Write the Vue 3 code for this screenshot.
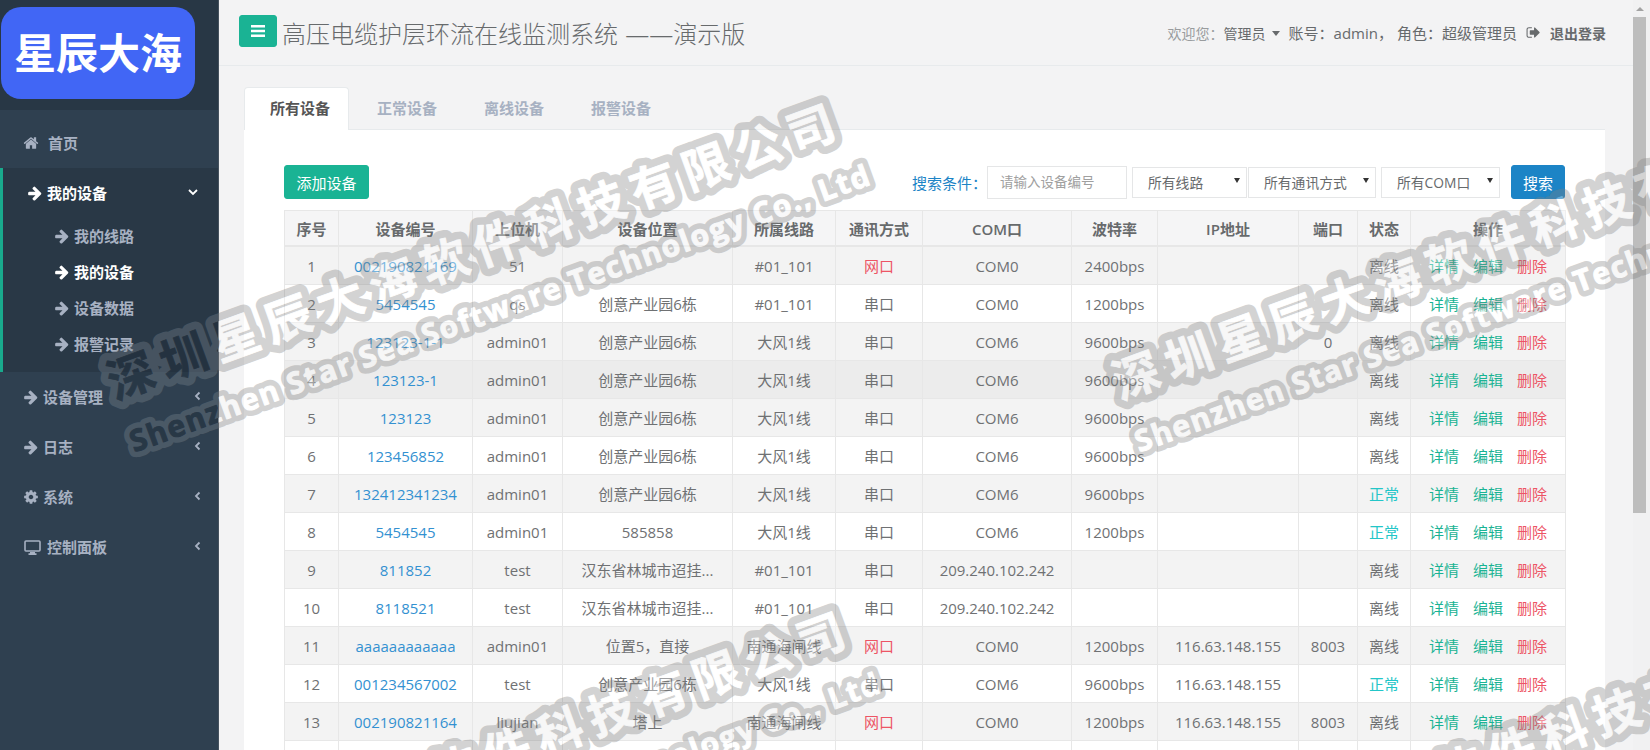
<template>
  <div class="page">
    <aside class="sidebar">
      <div class="logo-wrap">
        <div class="logo">星辰大海</div>
      </div>
      <nav>
        <a class="nav-row home">
          <svg class="ico" viewBox="0 0 1792 1792"><path :d="icons.home" /></svg>
          <span class="home-label">首页</span>
        </a>
        <div class="nav-open">
          <a class="nav-row open-head">
            <svg class="ico" viewBox="0 0 1792 1792"><path :d="icons.arrow" /></svg>
            <span>我的设备</span>
            <svg class="chev" viewBox="0 0 10 10"><path d="M1 3l4 4 4-4" /></svg>
          </a>
          <a v-for="s in subItems" :key="s" class="sub-row" :class="{ on: s === '我的设备' }">
            <svg class="ico" viewBox="0 0 1792 1792"><path :d="icons.arrow" /></svg>
            <span>{{ s }}</span>
          </a>
        </div>
        <a v-for="n in navItems" :key="n.label" class="nav-row">
          <svg v-if="n.icon === 'desktop'" class="ico desktop" viewBox="0 0 17 15">
            <rect x="1" y="1" width="15" height="10" rx="1" fill="none" stroke="currentColor" stroke-width="1.6" />
            <path d="M6 12h5v1.200h1.500V15h-8v-1.800H6z" />
          </svg>
          <svg v-else class="ico" viewBox="0 0 1792 1792"><path :d="icons[n.icon]" /></svg>
          <span>{{ n.label }}</span>
          <svg class="chev left" viewBox="0 0 10 10"><path d="M6.500 1.500L3 5l3.500 3.500" /></svg>
        </a>
      </nav>
      <svg class="wm-layer wm-dark" width="218" height="750">
        <g v-for="t in tiles" :key="t.x + '-' + t.y" :transform="`translate(${t.x} ${t.y}) rotate(-20)`">
          <g v-for="p in wmPasses" :key="p" :class="p">
            <text class="wm-cn" textLength="770">深圳星辰大海软件科技有限公司</text>
            <text class="wm-en" y="56" textLength="785">Shenzhen Star Sea Software Technology Co., Ltd</text>
          </g>
        </g>
      </svg>
    </aside>

    <main class="main">
      <header class="topbar">
        <div class="top-left">
          <button class="toggle">
            <svg viewBox="0 0 14 12" width="14" height="12"><path d="M0 1.300h14M0 6h14M0 10.700h14" stroke="#fff" stroke-width="2.600" /></svg>
          </button>
          <h1>高压电缆护层环流在线监测系统 ——演示版</h1>
        </div>
        <div class="top-right">
          <span class="welcome">欢迎您：</span>
          <span class="user">管理员<i class="caret"></i></span>
          <span class="account">账号：admin，</span>
          <span class="role">角色：超级管理员</span>
          <svg class="logout-ico" viewBox="0 0 1792 1792"><path :d="icons.signout" /></svg>
          <a class="logout">退出登录</a>
        </div>
      </header>

      <section class="content">
        <div class="tabs">
          <a v-for="(t, i) in tabs" :key="t" class="tab" :class="{ active: i === 0 }">{{ t }}</a>
        </div>
        <div class="panel">
          <div class="toolbar">
            <button class="btn add">添加设备</button>
            <div class="filters">
              <label>搜索条件：</label>
              <input class="search" placeholder="请输入设备编号" />
              <div class="sel-group">
                <span class="sel w1"><select><option>所有线路</option></select></span>
                <span class="sel w2"><select><option>所有通讯方式</option></select></span>
              </div>
              <span class="sel w3"><select><option>所有COM口</option></select></span>
              <button class="btn find">搜索</button>
            </div>
          </div>

          <table class="grid">
            <colgroup>
              <col v-for="w in colWidths" :key="w.k" :style="{ width: w.v + 'px' }" />
            </colgroup>
            <thead>
              <tr>
                <th v-for="h in heads" :key="h">{{ h }}</th>
              </tr>
            </thead>
            <tbody>
              <tr v-for="(r, i) in rows" :key="i" :class="{ stripe: i % 2 === 0, hover: i === 3 }">
                <td>{{ i + 1 }}</td>
                <td><a class="link">{{ r[0] }}</a></td>
                <td>{{ r[1] }}</td>
                <td>{{ r[2] }}</td>
                <td>{{ r[3] }}</td>
                <td :class="{ red: r[4] === '网口' }">{{ r[4] }}</td>
                <td>{{ r[5] }}</td>
                <td>{{ r[6] }}</td>
                <td>{{ r[7] }}</td>
                <td>{{ r[8] }}</td>
                <td :class="{ ok: r[9] === '正常' }">{{ r[9] }}</td>
                <td class="ops">
                  <a class="green">详情</a>
                  <a class="green">编辑</a>
                  <a class="red">删除</a>
                </td>
              </tr>
              <tr class="blank">
                <td v-for="h in heads" :key="h"></td>
              </tr>
            </tbody>
          </table>
        </div>
      </section>
    </main>

    <div class="scrollbar">
      <i class="up"></i>
      <div class="thumb"></div>
    </div>

    <svg class="wm-layer wm-light" width="1432" height="750" viewBox="218 0 1432 750">
      <g v-for="t in tiles" :key="t.x + '-' + t.y" :transform="`translate(${t.x} ${t.y}) rotate(-20)`">
        <g v-for="p in wmPasses" :key="p" :class="p">
          <text class="wm-cn" textLength="770">深圳星辰大海软件科技有限公司</text>
          <text class="wm-en" y="56" textLength="785">Shenzhen Star Sea Software Technology Co., Ltd</text>
        </g>
      </g>
    </svg>
  </div>
</template>

<script setup>
const icons = {
  home: 'M1472 992v480q0 26-19 45t-45 19h-384v-384h-256v384h-384q-26 0-45-19t-19-45v-480q0-1 .5-3t.5-3l575-474 575 474q1 2 1 6zm223-69l-62 74q-8 9-21 11h-3q-13 0-21-7l-692-577-692 577q-12 8-24 7-13-2-21-11l-62-74q-8-10-7-23.500t11-21.500l719-599q32-26 76-26t76 26l244 204v-195q0-14 9-23t23-9h192q14 0 23 9t9 23v408l219 182q10 8 11 21.500t-7 23.500z',
  arrow: 'M1600 960q0 54-37 91l-651 651q-39 37-91 37-51 0-90-37l-75-75q-38-38-38-91t38-91l293-293h-704q-52 0-84.500-37.500t-32.500-90.500v-128q0-53 32.500-90.500t84.500-37.500h704l-293-294q-38-36-38-90t38-90l75-75q38-38 90-38 53 0 91 38l651 651q37 35 37 90z',
  cog: 'M1152 896q0-106-75-181t-181-75-181 75-75 181 75 181 181 75 181-75 75-181zm512-109v222q0 12-8 23t-20 13l-185 28q-19 54-39 91 35 50 107 138 10 12 10 25t-9 23q-27 37-99 108t-94 71q-12 0-26-9l-138-108q-44 23-91 38-16 136-29 186-7 28-36 28h-222q-14 0-24.500-8.500t-11.500-21.500l-28-184q-49-16-90-37l-141 107q-10 9-25 9-14 0-25-11-126-114-165-168-7-10-7-23 0-12 8-23 15-21 51-66.500t54-70.500q-27-50-41-99l-183-27q-13-2-21-12.500t-8-23.500v-222q0-12 8-23t19-13l186-28q14-46 39-92-40-57-107-138-10-12-10-24 0-10 9-23 26-36 98.500-107.500t94.500-71.500q13 0 26 10l138 107q44-23 91-38 16-136 29-186 7-28 36-28h222q14 0 24.500 8.500t11.500 21.500l28 184q49 16 90 37l142-107q9-9 24-9 13 0 25 10 129 119 165 170 7 8 7 22 0 12-8 23-15 21-51 66.500t-54 70.500q26 50 41 98l183 28q13 2 21 12.500t8 23.500z',
  signout: 'M704 1440q0 4 1 20t.5 26.500-3 23.500-10 19.500-20.500 6.500h-320q-119 0-203.500-84.500t-84.500-203.500v-704q0-119 84.500-203.500t203.500-84.500h320q13 0 22.500 9.500t9.500 22.500q0 4 1 20t.5 26.500-3 23.500-10 19.500-20.500 6.500h-320q-66 0-113 47t-47 113v704q0 66 47 113t113 47h312l11.500 1 11.500 3 8 5.500 7 9 2 13.500zm928-544q0 26-19 45l-544 544q-19 19-45 19t-45-19-19-45v-288h-448q-26 0-45-19t-19-45v-384q0-26 19-45t45-19h448v-288q0-26 19-45t45-19 45 19l544 544q19 19 19 45z'
}

const subItems = ['我的线路', '我的设备', '设备数据', '报警记录']
const navItems = [
  { label: '设备管理', icon: 'arrow' },
  { label: '日志', icon: 'arrow' },
  { label: '系统', icon: 'cog' },
  { label: '控制面板', icon: 'desktop' }
]
const tabs = ['所有设备', '正常设备', '离线设备', '报警设备']
const heads = ['序号', '设备编号', '上位机', '设备位置', '所属线路', '通讯方式', 'COM口', '波特率', 'IP地址', '端口', '状态', '操作']
const colWidths = [54, 134, 90, 170, 103, 87, 149, 86, 141, 59, 53, 155].map((v, k) => ({ k, v }))

// 水印平铺位置，先画描边再画字
const tiles = [
  { x: 115, y: 400 },
  { x: 1120, y: 400 },
  { x: 125, y: 908 },
  { x: 1130, y: 908 }
]
const wmPasses = ['wm-under', 'wm-over']

const park = '创意产业园6栋'
const far = '汉东省林城市迢挂...'
const ip = '116.63.148.155'
const rows = [
  ['002190821169', '51', '', '#01_101', '网口', 'COM0', '2400bps', '', '', '离线'],
  ['5454545', 'qs', park, '#01_101', '串口', 'COM0', '1200bps', '', '', '离线'],
  ['123123-1-1', 'admin01', park, '大风1线', '串口', 'COM6', '9600bps', '', '0', '离线'],
  ['123123-1', 'admin01', park, '大风1线', '串口', 'COM6', '9600bps', '', '', '离线'],
  ['123123', 'admin01', park, '大风1线', '串口', 'COM6', '9600bps', '', '', '离线'],
  ['123456852', 'admin01', park, '大风1线', '串口', 'COM6', '9600bps', '', '', '离线'],
  ['132412341234', 'admin01', park, '大风1线', '串口', 'COM6', '9600bps', '', '', '正常'],
  ['5454545', 'admin01', '585858', '大风1线', '串口', 'COM6', '1200bps', '', '', '正常'],
  ['811852', 'test', far, '#01_101', '串口', '209.240.102.242', '', '', '', '离线'],
  ['8118521', 'test', far, '#01_101', '串口', '209.240.102.242', '', '', '', '离线'],
  ['aaaaaaaaaaaa', 'admin01', '位置5，直接', '南通海闸线', '网口', 'COM0', '1200bps', ip, '8003', '离线'],
  ['001234567002', 'test', park, '大风1线', '串口', 'COM6', '9600bps', ip, '', '正常'],
  ['002190821164', 'liujian', '塔上', '南通海闸线', '网口', 'COM0', '1200bps', ip, '8003', '离线']
]
</script>

<style scoped>
.page {
  position: relative;
  display: flex;
  height: 750px;
  overflow: hidden;
  background: #f3f3f4;
  color: #6f7173;
  font-family: "Open Sans", "Noto Sans CJK SC", sans-serif;
  font-size: 15px;
}

/* 侧边栏 */
.sidebar {
  position: relative;
  flex: 0 0 218px;
  background: #2f4050;
  border-right: 1px solid #46525e;
  overflow: hidden;
}
.logo-wrap {
  height: 110px;
  padding: 7px 23px 11px 1px;
  box-sizing: border-box;
  background: #283745;
}
.logo {
  height: 92px;
  background: #4166f5;
  border-radius: 20px;
  color: #fff;
  font-size: 42px;
  font-weight: 700;
  line-height: 92px;
  text-align: center;
}
.nav-row,
.sub-row {
  display: flex;
  align-items: center;
  color: #a7b1c2;
  font-weight: 600;
}
.nav-row > span,
.sub-row > span {
  margin-top: -2px;
}
.nav-row {
  position: relative;
  height: 50px;
  padding-left: 23px;
}
.home {
  height: 58px;
  padding-top: 8px;
  box-sizing: border-box;
}
.home-label {
  margin-left: 5px;
}
.ico {
  flex: none;
  width: 16px;
  height: 16px;
  margin-right: 4px;
  fill: currentColor;
}
.desktop {
  width: 17px;
  height: 15px;
  margin-right: 6px;
  margin-left: 1px;
}
.nav-open {
  height: 204px;
  background: #293846;
  border-left: 3px solid #19aa8d;
  box-sizing: border-box;
}
.open-head {
  padding-left: 24px;
  color: #fff;
}
.sub-row {
  height: 36px;
  padding-left: 51px;
}
.sub-row .ico {
  margin-right: 4px;
}
.sub-row.on {
  color: #fff;
}
.chev {
  position: absolute;
  top: 19px;
  right: 15px;
  width: 10px;
  height: 10px;
  fill: none;
  stroke: currentColor;
  stroke-width: 1.800;
}
.open-head .chev {
  right: 20px;
}

/* 顶栏 */
.main {
  flex: 1;
  min-width: 0;
}
.topbar {
  display: flex;
  justify-content: space-between;
  align-items: center;
  height: 65px;
  padding: 0 27px 0 20px;
  box-sizing: content-box;
  border-bottom: 1px solid #e7eaec;
}
.top-left {
  display: flex;
  align-items: center;
}
.toggle {
  display: flex;
  align-items: center;
  justify-content: center;
  width: 38px;
  height: 32px;
  margin: -4px 5px 0 0;
  padding: 0;
  background: #1ab394;
  border: 1px solid #1ab394;
  border-radius: 3px;
}
h1 {
  margin: 0;
  font-size: 24px;
  font-weight: 300;
  word-spacing: 1px;
  color: #676a6c;
  white-space: nowrap;
}
.top-right {
  display: flex;
  align-items: center;
  font-size: 14px;
  color: #676a6c;
  white-space: nowrap;
}
.welcome {
  color: #999c9e;
}
.caret {
  display: inline-block;
  margin: 0 9px 2px 6px;
  vertical-align: middle;
  border-top: 5px solid #676a6c;
  border-left: 4px solid transparent;
  border-right: 4px solid transparent;
}
.account,
.role {
  font-size: 15px;
}
.role {
  margin-left: 4px;
}
.logout-ico {
  width: 15px;
  height: 15px;
  margin: 0 9px 0 9px;
  fill: #676a6c;
}
.logout {
  font-weight: 600;
}

/* 内容 */
.content {
  padding: 21px 28px 0 25px;
}
.tabs {
  display: flex;
  height: 43px;
  border-bottom: 1px solid #e7eaec;
  box-sizing: border-box;
}
.tab {
  width: 105px;
  height: 43px;
  margin-right: 2px;
  padding: 0 0 0 25px;
  box-sizing: border-box;
  color: #a7b1c2;
  font-weight: 600;
  line-height: 41px;
  border: 1px solid transparent;
  border-bottom: 0;
  border-radius: 4px 4px 0 0;
}
.tab.active {
  color: #555;
  background: #fff;
  border-color: #e7eaec;
}
.panel {
  padding: 35px 40px 0;
  background: #fff;
}
.toolbar {
  display: flex;
  justify-content: space-between;
  align-items: center;
  height: 34px;
  margin-bottom: 11px;
}
.btn {
  height: 34px;
  padding: 0;
  color: #fff;
  font: inherit;
  border-radius: 3px;
}
.add {
  width: 85px;
  background: #1ab394;
  border: 1px solid #1ab394;
}
.find {
  width: 54px;
  margin-left: 11px;
  background: #1c84c6;
  border: 1px solid #1c84c6;
}
.filters {
  display: flex;
  align-items: center;
}
.filters label {
  color: #1c84c6;
}
.search {
  width: 140px;
  height: 33px;
  padding: 0 12px;
  box-sizing: border-box;
  color: #676a6c;
  font-family: inherit;
  font-size: 13.500px;
  border: 1px solid #e5e6e7;
  outline: 0;
}
.search::placeholder {
  color: #a0a0a0;
}
.sel-group {
  display: flex;
  margin: 0 5px;
  gap: 1px;
}
.sel {
  position: relative;
  display: block;
  height: 31px;
}
.sel::after {
  content: "";
  position: absolute;
  top: 11px;
  right: 7px;
  border-top: 5px solid #333;
  border-left: 3px solid transparent;
  border-right: 3px solid transparent;
}
.w1 { width: 115px; }
.w2 { width: 128px; }
.w3 { width: 119px; }
select {
  width: 100%;
  height: 31px;
  padding: 0 0 0 15px;
  color: #676a6c;
  font-family: inherit;
  font-size: 13.800px;
  background: #fff;
  border: 1px solid #e5e6e7;
  appearance: none;
  outline: 0;
}

/* 表格 */
.grid {
  width: 1281px;
  table-layout: fixed;
  border-collapse: collapse;
  color: #6f7173;
}
th,
td {
  padding: 0;
  text-align: center;
  border: 1px solid #e7e7e7;
  white-space: nowrap;
}
th {
  height: 34px;
  color: #676a6c;
  font-weight: 600;
  background: #f5f5f6;
  border-bottom: 2px solid #e7e7e7;
}
td {
  height: 37px;
}
.stripe td {
  background: #f3f3f3;
}
.hover td {
  background: #ececec;
}
.link {
  color: #3391d1;
}
.red {
  color: #ed5565;
}
.green {
  color: #1ab394;
}
.ok {
  color: #23c6c8;
}
.ops a {
  margin: 0 7px;
}

/* 滚动条 */
.scrollbar {
  position: relative;
  flex: 0 0 17px;
  background: #f1f1f2;
}
.up {
  position: absolute;
  top: 7px;
  left: 3px;
  border-bottom: 4px solid #a3a3a3;
  border-left: 4px solid transparent;
  border-right: 4px solid transparent;
}
.thumb {
  width: 13px;
  height: 496px;
  margin-top: 17px;
  background: #bdbdbd;
}

/* 水印 */
.wm-layer {
  position: absolute;
  top: 0;
  pointer-events: none;
}
.wm-dark {
  left: 0;
  opacity: 0.36;
}
.wm-light {
  left: 218px;
  opacity: 0.34;
}
.wm-cn,
.wm-en {
  font-weight: 700;
  stroke-linejoin: round;
  stroke-linecap: round;
}
.wm-cn {
  font-family: "Noto Sans CJK SC", sans-serif;
  font-size: 47px;
}
.wm-en {
  font-family: "Open Sans", sans-serif;
  font-size: 30px;
}
.wm-under .wm-cn {
  stroke-width: 16px;
}
.wm-under .wm-en {
  stroke-width: 12px;
}
.wm-over .wm-cn {
  stroke-width: 0.800px;
}
.wm-over .wm-en {
  stroke-width: 1px;
}
.wm-light .wm-under text {
  fill: #808080;
  stroke: #808080;
}
.wm-light .wm-over text {
  fill: #fff;
  stroke: #fff;
}
.wm-dark .wm-under text {
  fill: #7a858f;
  stroke: #7a858f;
}
.wm-dark .wm-over text {
  fill: #1d2a37;
  stroke: #1d2a37;
}
</style>

<style>
html,
body {
  margin: 0;
  overflow: hidden;
}
</style>
